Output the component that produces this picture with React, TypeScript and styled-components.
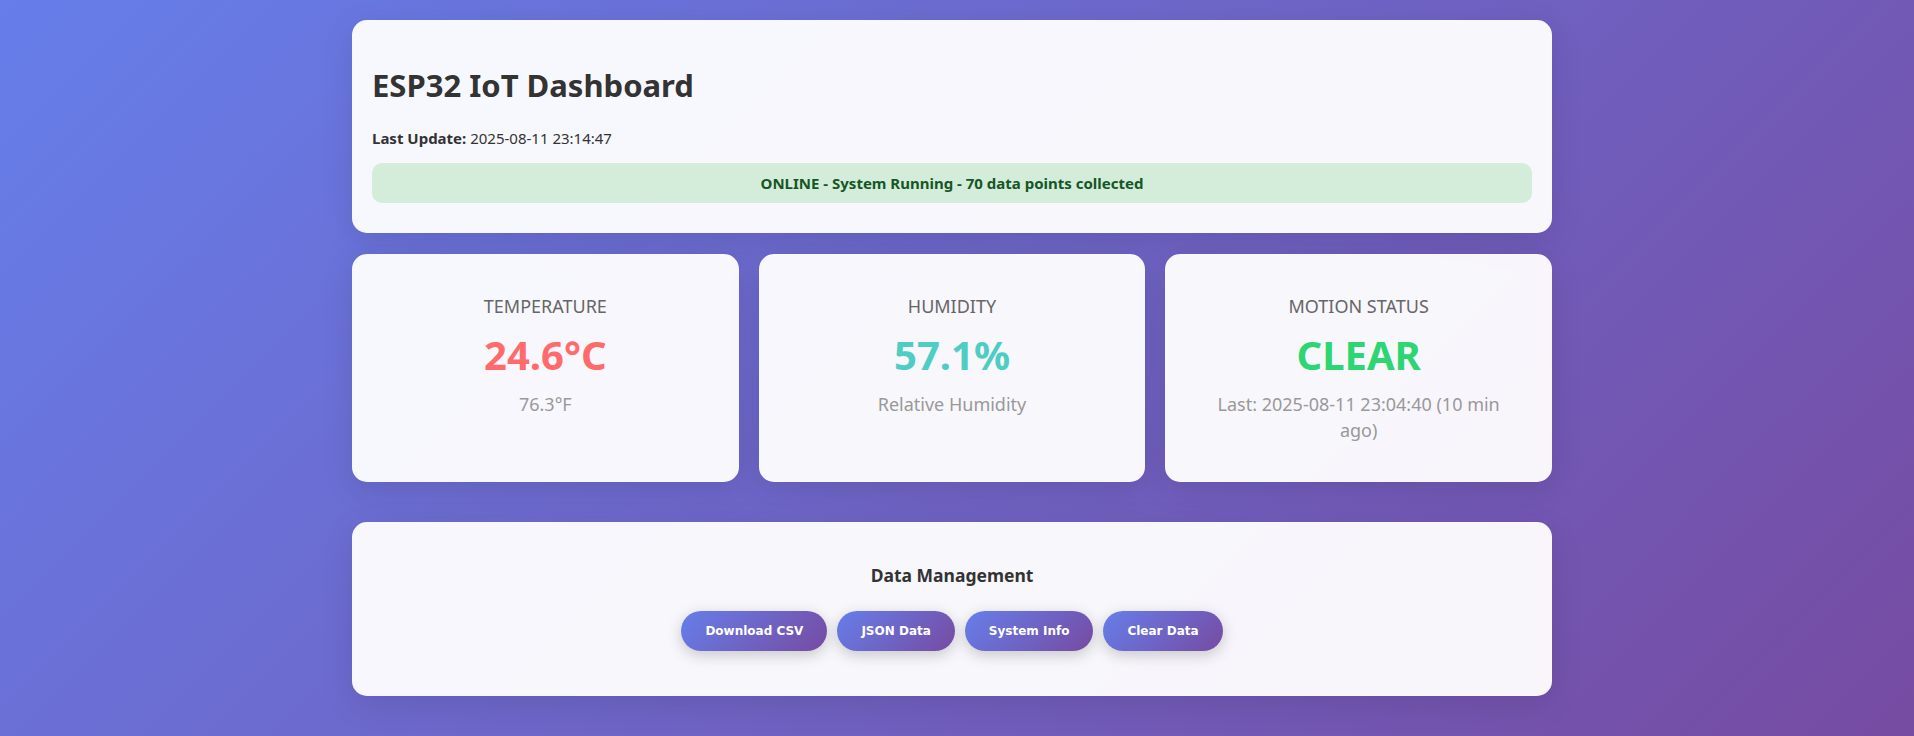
import React from "react";
import styled, { createGlobalStyle } from "styled-components";

const GlobalStyle = createGlobalStyle`
  * { box-sizing: border-box; }
  html, body { margin: 0; padding: 0; }
  body {
    font-family: "Segoe UI", "Noto Sans", "Open Sans", sans-serif;
    background: linear-gradient(135deg, #667eea 0%, #764ba2 100%);
    min-height: 100vh;
    color: #333;
  }
`;

const Page = styled.div`
  padding: 20px 30px 20px 20px;
  min-height: 100vh;
`;

const Container = styled.div`
  max-width: 1200px;
  margin: 0 auto;
`;

const Panel = styled.div`
  background: rgba(255, 255, 255, 0.95);
  border-radius: 15px;
  box-shadow: 0 8px 32px rgba(0, 0, 0, 0.1);
`;

const Header = styled(Panel)`
  padding: 20px;
  margin-bottom: 21px;
`;

const Title = styled.h1`
  margin: 25px 0 0;
  font-size: 31px;
  line-height: 40px;
  font-weight: 700;
  color: #333;
`;

const UpdateLine = styled.div`
  margin-top: 23px;
  font-size: 15px;
  line-height: 20px;
  color: #333;
  b { font-weight: 700; }
`;

const Status = styled.div`
  margin: 15px 0 10px;
  padding: 10px;
  background: #d4edda;
  color: #155724;
  border-radius: 10px;
  text-align: center;
  font-size: 15px;
  line-height: 20px;
  font-weight: 700;
`;

const Grid = styled.div`
  display: grid;
  grid-template-columns: repeat(3, 1fr);
  gap: 20px;
  margin-bottom: 40px;
`;

const SensorCard = styled(Panel)`
  padding: 40px 40px 39px;
  text-align: center;
`;

const Label = styled.div`
  font-size: 18px;
  line-height: 24px;
  color: #666;
  text-transform: uppercase;
`;

const Value = styled.div<{ $color: string }>`
  margin-top: 13px;
  font-size: 40px;
  line-height: 48px;
  font-weight: 700;
  color: ${(p) => p.$color};
`;

const Sub = styled.div`
  margin-top: 12px;
  font-size: 18px;
  line-height: 26px;
  color: #999;
`;

const DataCard = styled(Panel)`
  padding: 41px 25px 45px;
  text-align: center;
`;

const SectionTitle = styled.h3`
  margin: 0 0 24px;
  font-size: 17.5px;
  line-height: 24px;
  font-weight: 700;
  color: #333;
`;

const ButtonRow = styled.div`
  display: flex;
  justify-content: center;
  gap: 10px;
`;

const ActionButton = styled.button`
  height: 40px;
  padding: 0 24px;
  border: none;
  border-radius: 20px;
  background: linear-gradient(135deg, #667eea 0%, #764ba2 100%);
  color: #fff;
  font-family: "DejaVu Sans", Verdana, sans-serif;
  font-size: 12px;
  font-weight: 700;
  box-shadow: 0 4px 15px rgba(0, 0, 0, 0.2);
  cursor: pointer;
`;

const sensors = [
  { label: "Temperature", value: "24.6°C", color: "#ff6b6b", sub: "76.3°F" },
  { label: "Humidity", value: "57.1%", color: "#4ecdc4", sub: "Relative Humidity" },
  {
    label: "Motion Status",
    value: "CLEAR",
    color: "#2ed573",
    sub: "Last: 2025-08-11 23:04:40 (10 min ago)",
  },
];

const actions = ["Download CSV", "JSON Data", "System Info", "Clear Data"];

export default function App() {
  return (
    <>
      <GlobalStyle />
      <Page>
        <Container>
          <Header>
            <Title>ESP32 IoT Dashboard</Title>
            <UpdateLine>
              <b>Last Update:</b> 2025-08-11 23:14:47
            </UpdateLine>
            <Status>ONLINE - System Running - 70 data points collected</Status>
          </Header>
          <Grid>
            {sensors.map((s) => (
              <SensorCard key={s.label}>
                <Label>{s.label}</Label>
                <Value $color={s.color}>{s.value}</Value>
                <Sub>{s.sub}</Sub>
              </SensorCard>
            ))}
          </Grid>
          <DataCard>
            <SectionTitle>Data Management</SectionTitle>
            <ButtonRow>
              {actions.map((a) => (
                <ActionButton key={a}>{a}</ActionButton>
              ))}
            </ButtonRow>
          </DataCard>
        </Container>
      </Page>
    </>
  );
}
